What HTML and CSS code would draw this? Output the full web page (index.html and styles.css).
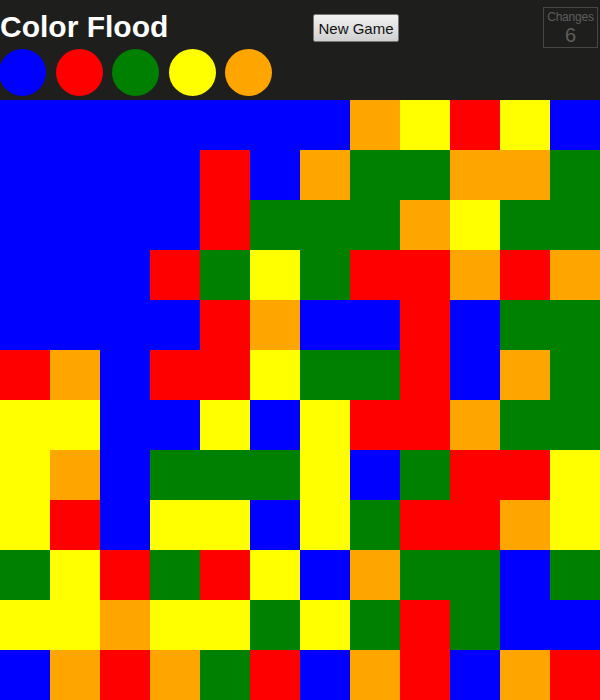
FILE: index.html
```html
<!DOCTYPE html>
<html>
<head>
<meta charset="utf-8">
<link rel="stylesheet" href="styles.css">
</head>
<body>
<div class="header">
  <div class="left">
    <h1 class="title">Color Flood</h1>
    <div class="picker">
      <span class="dot blue"></span>
      <span class="dot red"></span>
      <span class="dot green"></span>
      <span class="dot yellow"></span>
      <span class="dot orange"></span>
    </div>
  </div>
  <button class="newgame">New Game</button>
  <div class="changes">
    <div class="changes-label">Changes</div>
    <div class="changes-num">6</div>
  </div>
</div>
<div class="board" id="board"></div>
<script src="app.js"></script>
</body>
</html>
```
FILE: styles.css
```css
html, body {
  margin: 0;
  padding: 0;
  background: #1e1e1c;
  font-family: "Liberation Sans", Arial, sans-serif;
  overflow: hidden;
}
.header {
  display: flex;
  align-items: flex-start;
  height: 100px;
  background: #1e1e1c;
}
.left {
  width: 313px;
  display: flex;
  flex-direction: column;
}
.title {
  margin: 9px 0 0 0;
  font-size: 30px;
  line-height: 36px;
  font-weight: bold;
  color: #ffffff;
}
.picker {
  display: flex;
  gap: 9.5px;
  margin-top: 4px;
}
.dot {
  width: 47px;
  height: 47px;
  border-radius: 50%;
  display: block;
}
.blue { background: #0000ff; }
.red { background: #ff0000; }
.green { background: #008000; }
.yellow { background: #ffff00; }
.orange { background: #ffa500; }
.picker .blue { margin-left: -1px; }
.newgame {
  margin-top: 14px;
  height: 28px;
  width: 86px;
  padding: 0;
  font-family: "Liberation Sans", Arial, sans-serif;
  font-size: 15px;
  color: #111;
  border: 1px solid #777;
  border-radius: 2px;
  background: linear-gradient(#f2f2f2, #d0d0d0);
}
.changes {
  margin-left: auto;
  margin-right: 2px;
  margin-top: 7px;
  width: 53px;
  height: 39px;
  border: 1px solid #464644;
  text-align: center;
  color: #5e5e5c;
}
.changes-label {
  font-size: 12px;
  line-height: 14px;
  margin-top: 2px;
  letter-spacing: -0.2px;
}
.changes-num {
  font-size: 20px;
  line-height: 22px;
}
.board {
  display: grid;
  grid-template-columns: repeat(12, 50px);
  grid-auto-rows: 50px;
}
.cell { display: block; }
```
FILE: app.js
```js
var rows = [
  "BBBBBBBOYRYB",
  "BBBBRBOGGOOG",
  "BBBBRGGGOYGG",
  "BBBRGYGRRORO",
  "BBBBROBBRBGG",
  "ROBRRYGGRBOG",
  "YYBBYBYRROGG",
  "YOBGGGYBGRRY",
  "YRBYYBYGRROY",
  "GYRGRYBOGGBG",
  "YYOYYGYGRGBB",
  "BOROGRBORBOR"
];
var map = { B: "blue", R: "red", G: "green", Y: "yellow", O: "orange" };
var board = document.getElementById("board");
rows.forEach(function (row) {
  row.split("").forEach(function (c) {
    var d = document.createElement("div");
    d.className = "cell " + map[c];
    board.appendChild(d);
  });
});
```
